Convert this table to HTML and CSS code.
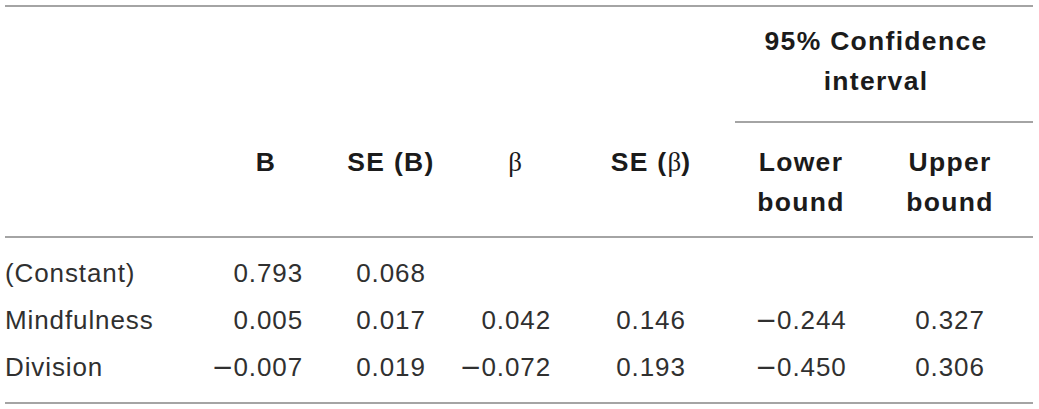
FILE: index.html
```html
<!DOCTYPE html>
<html lang="en">
<head>
<meta charset="utf-8">
<title>Regression table</title>
<link rel="stylesheet" href="styles.css">
</head>
<body>
<table class="reg">
  <colgroup>
    <col class="c-label">
    <col class="c-b">
    <col class="c-seb">
    <col class="c-beta">
    <col class="c-sebeta">
    <col class="c-lower">
    <col class="c-upper">
  </colgroup>
  <thead>
    <tr class="h1">
      <th></th><th></th><th></th><th></th><th></th>
      <th colspan="2" class="ci"><div class="ci-inner">95% Confidence<br>interval</div></th>
    </tr>
    <tr class="h2">
      <th></th>
      <th>B</th>
      <th>SE (B)</th>
      <th><span class="greek">β</span></th>
      <th>SE (<span class="greek">β</span>)</th>
      <th>Lower<br>bound</th>
      <th class="upper">Upper<br>bound</th>
    </tr>
  </thead>
  <tbody>
    <tr class="first">
      <td class="label">(Constant)</td>
      <td class="num-r">0.793</td>
      <td class="num-c">0.068</td>
      <td class="num-r"></td>
      <td class="num-c"></td>
      <td class="num-c"></td>
      <td class="num-c upper"></td>
    </tr>
    <tr>
      <td class="label">Mindfulness</td>
      <td class="num-r">0.005</td>
      <td class="num-c">0.017</td>
      <td class="num-r">0.042</td>
      <td class="num-c">0.146</td>
      <td class="num-c"><span class="minus">−</span>0.244</td>
      <td class="num-c upper">0.327</td>
    </tr>
    <tr class="last">
      <td class="label">Division</td>
      <td class="num-r"><span class="minus">−</span>0.007</td>
      <td class="num-c">0.019</td>
      <td class="num-r"><span class="minus">−</span>0.072</td>
      <td class="num-c">0.193</td>
      <td class="num-c"><span class="minus">−</span>0.450</td>
      <td class="num-c upper">0.306</td>
    </tr>
  </tbody>
</table>
</body>
</html>
```

FILE: styles.css
```css
html, body {
  margin: 0;
  padding: 0;
  background: #ffffff;
}

body {
  padding: 5px 0 0 5px;
  font-family: "Liberation Sans", Arial, sans-serif;
}

.reg {
  border-collapse: collapse;
  table-layout: fixed;
  width: 1028px;
  border-top: 2px solid #a4a4a4;
  border-bottom: 2px solid #a4a4a4;
}

.c-label { width: 200px; }
.c-b { width: 122px; }
.c-seb { width: 128px; }
.c-beta { width: 120px; }
.c-sebeta { width: 152px; }
.c-lower { width: 148px; }
.c-upper { width: 158px; }

th {
  padding: 0;
  font-weight: bold;
  font-size: 26.5px;
  letter-spacing: 1.3px;
  line-height: 40px;
  color: #1b1b1b;
  text-align: center;
  vertical-align: top;
}

.h1 th {
  padding-top: 14px;
}

.ci {
  padding-left: 8px;
}

.ci-inner {
  padding: 0 16px 20px 0;
  border-bottom: 2px solid #a4a4a4;
}

.h2 {
  border-bottom: 2px solid #a4a4a4;
}

.h2 th {
  padding-top: 19px;
  padding-bottom: 13.5px;
}

.h2 th.upper {
  padding-right: 8px;
}

.greek {
  font-family: "Liberation Serif", "Times New Roman", serif;
  font-weight: normal;
  font-size: 27px;
  letter-spacing: 0;
}

td {
  padding: 0;
  font-size: 26px;
  letter-spacing: 0.9px;
  line-height: 47px;
  color: #303030;
  white-space: nowrap;
}

.minus {
  font-family: "DejaVu Sans", sans-serif;
  font-size: 26px;
  letter-spacing: 0;
}

.first td {
  padding-top: 12px;
}

.last td {
  padding-bottom: 11px;
}

.label {
  text-align: left;
}

.num-r {
  text-align: right;
  padding-right: 24px;
}

.num-c {
  text-align: center;
}

td.upper {
  padding-right: 8px;
}
```
